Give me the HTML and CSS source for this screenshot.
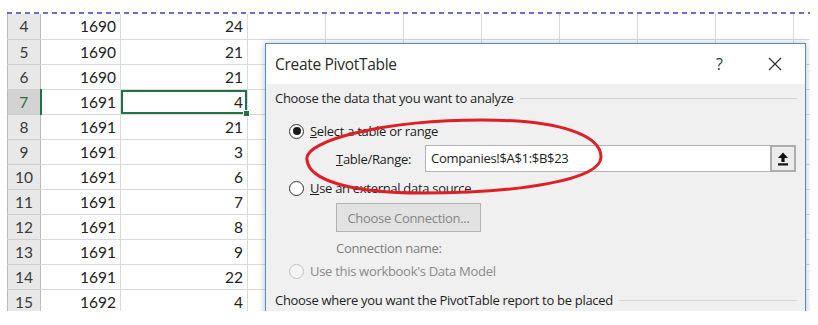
FILE: index.html
```html
<!DOCTYPE html>
<html lang="en">
<head>
    <meta charset="UTF-8">
    <title>Create PivotTable</title>
    <link rel="stylesheet" href="styles.css">
</head>
<body>

    <div class="shot">
        <!-- page break line -->
        <div class="page-break"></div>

        <!-- Worksheet -->
        <table class="sheet">
            <colgroup>
                <col class="c-head"><col class="c-a"><col class="c-b">
                <col class="c-x"><col class="c-x"><col class="c-x"><col class="c-x">
                <col class="c-x"><col class="c-x"><col class="c-x"><col class="c-x">
            </colgroup>
            <tr><th>4</th><td>1690</td><td>24</td><td></td><td></td><td></td><td></td><td></td><td></td><td></td><td></td></tr>
            <tr><th>5</th><td>1690</td><td>21</td><td></td><td></td><td></td><td></td><td></td><td></td><td></td><td></td></tr>
            <tr><th>6</th><td>1690</td><td>21</td><td></td><td></td><td></td><td></td><td></td><td></td><td></td><td></td></tr>
            <tr class="active"><th>7</th><td>1691</td><td class="sel">4</td><td></td><td></td><td></td><td></td><td></td><td></td><td></td><td></td></tr>
            <tr><th>8</th><td>1691</td><td>21</td><td></td><td></td><td></td><td></td><td></td><td></td><td></td><td></td></tr>
            <tr><th>9</th><td>1691</td><td>3</td><td></td><td></td><td></td><td></td><td></td><td></td><td></td><td></td></tr>
            <tr><th>10</th><td>1691</td><td>6</td><td></td><td></td><td></td><td></td><td></td><td></td><td></td><td></td></tr>
            <tr><th>11</th><td>1691</td><td>7</td><td></td><td></td><td></td><td></td><td></td><td></td><td></td><td></td></tr>
            <tr><th>12</th><td>1691</td><td>8</td><td></td><td></td><td></td><td></td><td></td><td></td><td></td><td></td></tr>
            <tr><th>13</th><td>1691</td><td>9</td><td></td><td></td><td></td><td></td><td></td><td></td><td></td><td></td></tr>
            <tr><th>14</th><td>1691</td><td>22</td><td></td><td></td><td></td><td></td><td></td><td></td><td></td><td></td></tr>
            <tr><th>15</th><td>1692</td><td>4</td><td></td><td></td><td></td><td></td><td></td><td></td><td></td><td></td></tr>
        </table>

        <!-- Create PivotTable dialog -->
        <div class="dialog">
            <div class="dialog-title">
                <span class="title-text">Create PivotTable</span>
                <span class="title-help">?</span>
                <svg class="title-close" width="14" height="14" viewBox="0 0 14 14">
                    <path d="M1 1 L13 13 M13 1 L1 13" stroke="#333" stroke-width="1.3" fill="none"/>
                </svg>
            </div>
            <div class="dialog-body">
                <div class="section">
                    <span>Choose the data that you want to analyze</span>
                    <div class="rule"></div>
                </div>

                <label class="option opt-first">
                    <span class="radio checked"></span>
                    <span><u>S</u>elect a table or range</span>
                </label>

                <div class="range-row">
                    <span class="range-label"><u>T</u>able/Range:</span>
                    <div class="range-input">Companies!$A$1:$B$23</div>
                    <button class="range-btn">
                        <svg width="12" height="14" viewBox="0 0 12 14">
                            <path d="M6 0.5 L11 6 L7.6 6 L7.6 10 L4.4 10 L4.4 6 L1 6 Z" fill="#111"/>
                            <rect x="1" y="11.3" width="10" height="2.2" fill="#111"/>
                        </svg>
                    </button>
                </div>

                <label class="option opt-second">
                    <span class="radio"></span>
                    <span><u>U</u>se an external data source</span>
                </label>

                <button class="conn-btn" disabled>Choose Connection...</button>
                <div class="conn-name">Connection name:</div>

                <label class="option disabled">
                    <span class="radio"></span>
                    <span>Use this workbook's Data Model</span>
                </label>

                <div class="section section-two">
                    <span>Choose where you want the PivotTable report to be placed</span>
                    <div class="rule"></div>
                </div>
            </div>
        </div>

        <!-- hand drawn red mark -->
        <svg class="mark" width="803" height="299" viewBox="0 0 803 299">
            <path d="M300 148 C296 128 380 108 475 108 C556 108 594 124 594 145 C594 168 512 181 415 181 C343 181 302 168 300 148 Z"
                  fill="none" stroke="#e01e26" stroke-width="3"/>
        </svg>
    </div>

</body>
</html>
```

FILE: styles.css
```css
body {
    margin: 0;
    padding: 12px 8px 14px 7px;
    background-color: #ffffff;
}

.shot {
    position: relative;
    width: 803px;
    height: 299px;
    overflow: hidden;
    background-color: #ffffff;
}

.page-break {
    height: 2px;
    background: repeating-linear-gradient(to right, #6c6cd4 0 5px, transparent 5px 9px);
}

/* worksheet */
.sheet {
    border-collapse: collapse;
    table-layout: fixed;
    width: 862px;
    font-family: 'Lato', sans-serif;
    font-size: 15.5px;
    color: #222;
}

.c-head { width: 33px; }
.c-a { width: 80px; }
.c-b { width: 127px; }
.c-x { width: 78px; }

.sheet tr {
    height: 25px;
}

.sheet th {
    background-color: #e8e8e8;
    border-left: 1px solid #b9b9b9;
    border-right: 1px solid #bcbcbc;
    border-bottom: 1px solid #cfcfcf;
    font-weight: normal;
    color: #3a3a3a;
    text-align: center;
    padding: 0;
}

.sheet td {
    border-right: 1px solid #dadada;
    border-bottom: 1px solid #dadada;
    text-align: right;
    padding: 0 4px 0 0;
}

.sheet tr.active th {
    background-color: #d3d3d3;
    color: #217346;
    border-right: 2px solid #217346;
}

.sheet td.sel {
    position: relative;
    box-shadow: inset 0 0 0 2px #217346;
}

.sheet td.sel::after {
    content: '';
    position: absolute;
    right: -3px;
    bottom: -3px;
    width: 5px;
    height: 5px;
    background-color: #217346;
    border: 1px solid #ffffff;
}

/* dialog */
.dialog {
    position: absolute;
    left: 258px;
    top: 31px;
    width: 539px;
    height: 300px;
    border: 1px solid #4d8fd6;
    background-color: #f0f0f0;
    box-shadow: 0 0 7px rgba(0, 0, 0, 0.25);
    font-family: 'Open Sans', sans-serif;
    font-size: 13px;
    letter-spacing: -0.3px;
    color: #1e1e1e;
}

.dialog-title {
    height: 40px;
    background-color: #ffffff;
    display: flex;
    align-items: center;
    padding-left: 9px;
}

.title-text {
    flex: 1;
    font-size: 15.5px;
    color: #2a2a2a;
}

.title-help {
    font-size: 16px;
    color: #333;
    width: 52px;
}

.title-close {
    margin-right: 23px;
}

.dialog-body {
    display: flex;
    flex-direction: column;
}

.section {
    display: flex;
    align-items: center;
    height: 28px;
    padding: 0 8px 0 9px;
}

.section .rule {
    flex: 1;
    height: 1px;
    background-color: #d6d6d6;
    margin-left: 6px;
}

.section-two {
    margin-top: 3px;
}

.option {
    display: flex;
    align-items: center;
    height: 24px;
    padding-left: 23px;
}

.opt-first {
    margin-top: 7px;
}

.opt-second {
    margin-top: 4px;
}

.option.disabled {
    color: #8a8a8a;
    margin-top: 1px;
}

.radio {
    width: 13px;
    height: 13px;
    border: 1px solid #333;
    border-radius: 50%;
    background-color: #ffffff;
    margin-right: 6px;
    display: flex;
    align-items: center;
    justify-content: center;
}

.radio.checked::after {
    content: '';
    width: 8px;
    height: 8px;
    border-radius: 50%;
    background-color: #1a1a1a;
}

.option.disabled .radio {
    border-color: #c2c2c2;
    background-color: #f4f4f4;
}

.range-row {
    display: flex;
    align-items: center;
    height: 27px;
    margin-top: 2px;
    padding-left: 70px;
}

.range-label {
    width: 89px;
}

.range-input {
    box-sizing: border-box;
    width: 345px;
    height: 27px;
    line-height: 25px;
    border: 1px solid #b4b4b4;
    border-right: none;
    background-color: #ffffff;
    padding-left: 5px;
}

.range-btn {
    box-sizing: border-box;
    width: 26px;
    height: 27px;
    border: 2px solid #adadad;
    background-color: #ececec;
    padding: 0;
    display: flex;
    align-items: center;
    justify-content: center;
}

.conn-btn {
    align-self: flex-start;
    box-sizing: border-box;
    width: 145px;
    height: 29px;
    margin: 3px 0 0 70px;
    border: 1px solid #b2b2b2;
    background-color: #e2e2e2;
    color: #858585;
    font-family: 'Open Sans', sans-serif;
    font-size: 13px;
    letter-spacing: -0.3px;
}

.conn-name {
    height: 20px;
    line-height: 20px;
    margin-top: 6px;
    padding-left: 70px;
    color: #7d7d7d;
}

.mark {
    position: absolute;
    left: 0;
    top: 0;
}
```
